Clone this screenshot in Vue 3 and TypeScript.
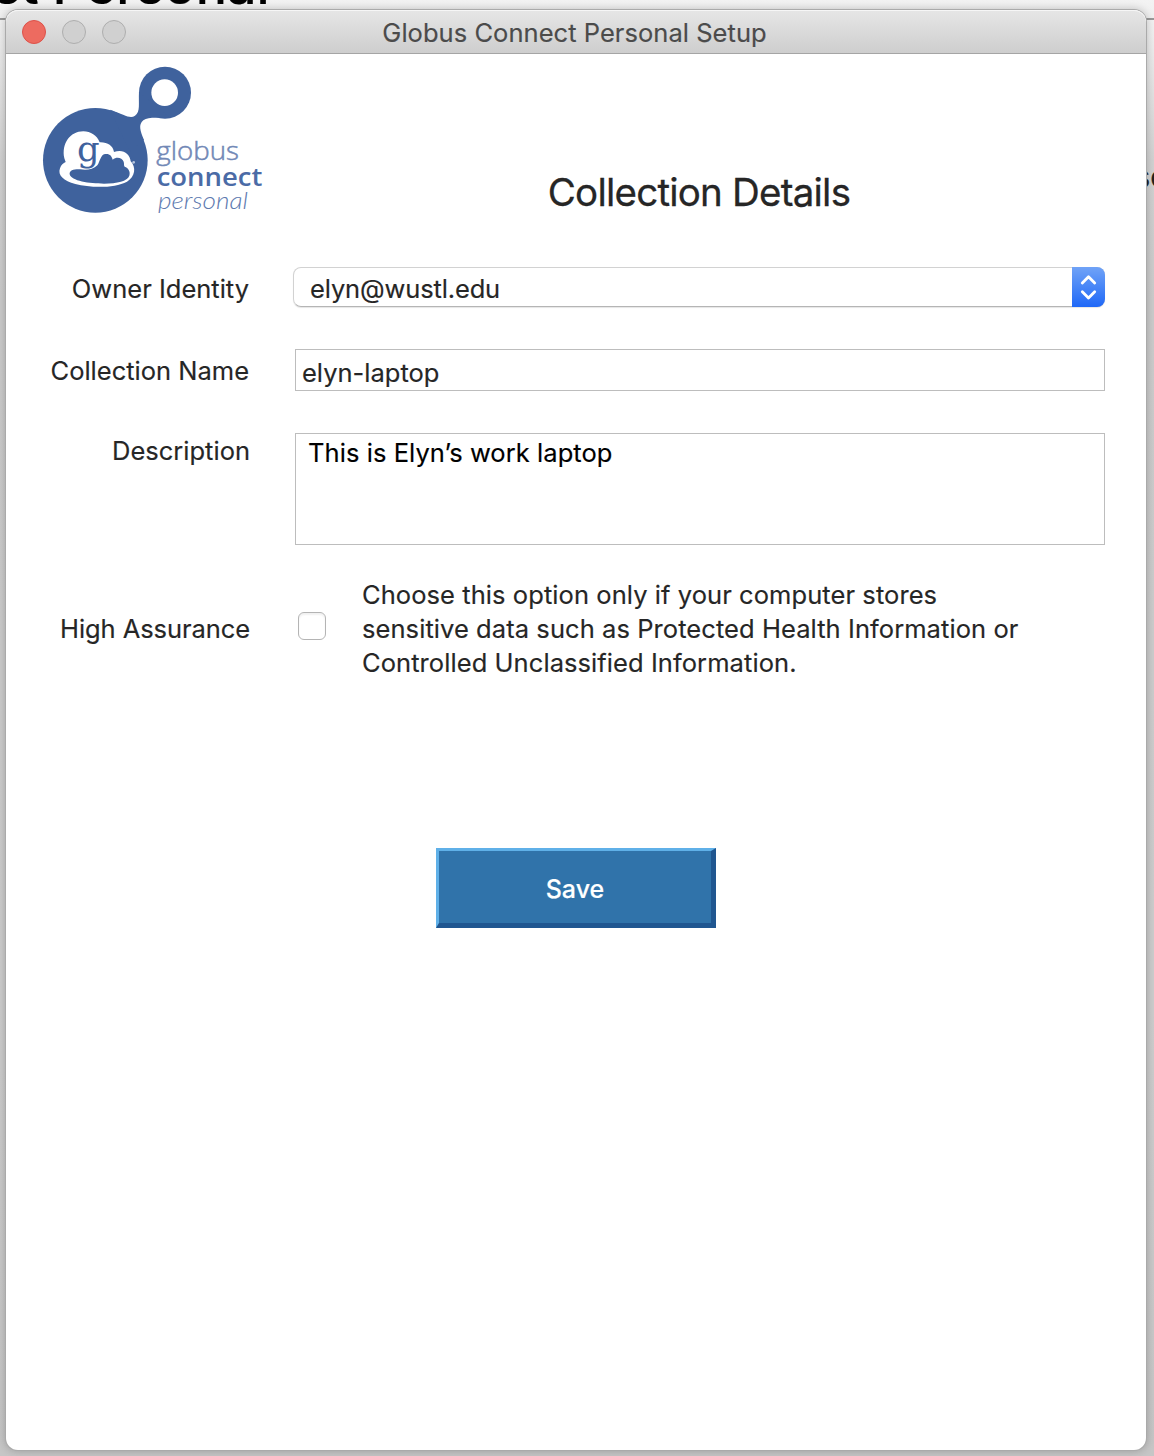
<script setup lang="ts">
import { ref } from 'vue'

const owner = ref('elyn@wustl.edu')
const collectionName = ref('elyn-laptop')
const description = ref('This is Elyn’s work laptop')
const highAssurance = ref(false)
const hint = [
  'Choose this option only if your computer stores',
  'sensitive data such as Protected Health Information or',
  'Controlled Unclassified Information.',
]
</script>

<template>
  <div class="desktop">
    <div class="back-rule"></div>
    <span class="back-title">st Personal</span>
    <span class="back-text">se</span>

    <main class="window">
      <header class="titlebar">
        <div class="lights">
          <i class="light close"></i>
          <i class="light"></i>
          <i class="light"></i>
        </div>
        <span class="title">Globus Connect Personal Setup</span>
      </header>

      <section class="intro">
        <svg class="logo" width="250" height="160" viewBox="0 0 750 480">
          <g fill="#3f629d">
            <circle cx="196" cy="316" r="157" />
            <circle cx="405" cy="113" r="78" />
            <path d="M240 164 C285 180 300 192 315 182 C332 170 325 145 327 110 L420 188 C385 190 355 184 340 196 C324 209 331 228 342 255 L300 290 Z" />
          </g>
          <circle cx="404" cy="113" r="40" fill="#fff" />
          <path fill="#fff" d="M103 310 C94 266 120 229 160 229 C182 229 201 241 209 262 C232 261 249 272 252 291 C278 281 300 295 302 319 C319 336 316 366 291 380 C253 400 183 399 136 387 C101 379 82 360 90 340 C93 330 100 324 107 321 Z" />
          <path fill="#3f629d" d="M119 358 C117 345 134 342 151 343 C168 346 190 344 202 331 C211 318 211 300 225 297 C239 295 245 302 248 314 C261 304 276 309 281 320 C283 326 281 331 284 335 C295 338 302 350 298 362 C292 379 262 385 222 386 C179 386 123 378 119 358 Z" />
          <text class="mark" x="141" y="319" textLength="68" lengthAdjust="spacingAndGlyphs">g</text>
          <circle cx="311" cy="322" r="4" fill="#b8c6de" />
          <text class="globus" x="379" y="315" textLength="248" lengthAdjust="spacingAndGlyphs">globus</text>
          <text class="connect" x="380" y="392" textLength="317" lengthAdjust="spacingAndGlyphs">connect</text>
          <text class="personal" x="384" y="461" textLength="270" lengthAdjust="spacingAndGlyphs">personal</text>
        </svg>
        <h1>Collection Details</h1>
      </section>

      <form class="form" @submit.prevent>
        <label class="label owner">Owner Identity</label>
        <div class="select">
          <span class="select-value">{{ owner }}</span>
          <span class="stepper">
            <svg width="33" height="40" viewBox="0 0 33 40" fill="none" stroke="#fff" stroke-width="2.8" stroke-linecap="round" stroke-linejoin="round">
              <path d="M10.3 16 L16.5 9.7 L22.7 16 M10.3 24.7 L16.5 31 L22.7 24.7" />
            </svg>
          </span>
        </div>

        <label class="label name">Collection Name</label>
        <div class="input"><span>{{ collectionName }}</span></div>

        <label class="label desc">Description</label>
        <div class="area"><span>{{ description }}</span></div>

        <label class="label high">High Assurance</label>
        <div class="assurance">
          <span class="checkbox" role="checkbox" :aria-checked="highAssurance"></span>
          <p class="hint">
            <span v-for="(line, i) in hint" :key="i">{{ line }}</span>
          </p>
        </div>
      </form>

      <button class="save" type="button"><span>Save</span></button>
    </main>
  </div>
</template>

<style>
body {
  margin: 0;
}
</style>

<style scoped>
.desktop {
  position: relative;
  box-sizing: border-box;
  width: 1154px;
  height: 1456px;
  padding: 10px 8px 6px 6px;
  overflow: hidden;
  background: linear-gradient(#f3f3f3 0, #efefef 19px, #f2f2f2 20px, #d2d2d2 160px, #cbcbcb 300px, #cdcdcd 1000px, #c6c6c6 1456px);
  font-family: Inter, "Liberation Sans", sans-serif;
  font-size: 25.5px;
  color: #262626;
  -webkit-text-stroke: 0.15px currentColor;
}
.back-rule {
  position: absolute;
  left: 0;
  right: 0;
  top: 18px;
  height: 2px;
  background: #999;
}
.back-title {
  position: absolute;
  left: -7px;
  top: -44px;
  font-size: 52px;
  line-height: 60px;
  font-weight: 500;
  color: #000;
  white-space: nowrap;
}
.back-text {
  position: absolute;
  left: 1132px;
  top: 156px;
  font-size: 33px;
  line-height: 40px;
  font-weight: 600;
  color: #222;
}
.window {
  position: relative;
  display: flex;
  flex-direction: column;
  width: 1140px;
  height: 1440px;
  border-radius: 12px;
  background: #fff;
  box-shadow: 0 0 0 1px #aaa, 0 0 8px 1px rgba(0, 0, 0, 0.22);
}
.titlebar {
  box-sizing: border-box;
  position: relative;
  display: flex;
  align-items: center;
  justify-content: center;
  height: 44px;
  border-bottom: 1px solid #a5a5a5;
  border-radius: 12px 12px 0 0;
  background: linear-gradient(#e6e6e6, #cecece);
  box-shadow: inset 0 1px 0 #f6f6f6;
}
.lights {
  position: absolute;
  left: 16px;
  top: 10px;
  display: flex;
  gap: 16px;
}
.light {
  box-sizing: border-box;
  width: 24px;
  height: 24px;
  border: 1px solid #aeaeae;
  border-radius: 50%;
  background: #d0d0d0;
}
.light.close {
  border-color: #dd5149;
  background: #ed6b60;
}
.title {
  line-height: 30px;
  margin: 2px 3px 0 0;
  letter-spacing: 0.04px;
  color: #4b4b4b;
  white-space: nowrap;
}
.intro {
  display: flex;
  height: 213px;
}
.logo {
  flex: none;
  margin: 1px 0 0 24px;
  overflow: visible;
  -webkit-text-stroke: 0;
}
.mark {
  font: 108px "DejaVu Serif", serif;
  fill: #3f629d;
}
.globus {
  font: 300 78px "Open Sans", sans-serif;
  fill: #7188b6;
  stroke: #7188b6;
  stroke-width: 1.5px;
}
.connect {
  font: 600 78px "Open Sans", sans-serif;
  fill: #4b6ba6;
}
.personal {
  font: italic 300 72px Lato, sans-serif;
  fill: #5e7ab0;
}
h1 {
  flex: 1;
  margin: 114px 28px 0 0;
  text-align: center;
  font-size: 38.5px;
  line-height: 48px;
  font-weight: 400;
  white-space: nowrap;
  letter-spacing: -0.78px;
  -webkit-text-stroke: 0.3px currentColor;
}
.form {
  display: grid;
  grid-template-columns: 244px 816px;
  column-gap: 43px;
}
.label {
  justify-self: end;
  line-height: 34px;
  white-space: nowrap;
}
.owner { margin: 5px 1px 0 0; }
.name { margin: 5px 1px 0 0; }
.desc { margin-top: 1px; }
.high {
  margin-top: 67px;
  letter-spacing: -0.08px;
}
.select {
  box-sizing: border-box;
  display: flex;
  justify-content: space-between;
  width: 812px;
  height: 40px;
  margin-bottom: 42px;
  border: 1px solid #d2d2d2;
  border-bottom-color: #b5b5b5;
  border-radius: 8px;
  box-shadow: 0 1px 1px rgba(0, 0, 0, 0.1);
}
.select-value {
  padding: 4px 0 0 16px;
  line-height: 34px;
  letter-spacing: -0.14px;
}
.stepper {
  width: 33px;
  height: 40px;
  margin: -1px;
  border-radius: 0 8px 8px 0;
  background: linear-gradient(#70a3f7, #1f68f7);
}
.input,
.area {
  box-sizing: border-box;
  width: 810px;
  margin-left: 2px;
  border: 1px solid #bdbdbd;
  line-height: 34px;
}
.input {
  height: 42px;
  margin-bottom: 42px;
  padding: 6px 0 0 6px;
}
.area {
  height: 112px;
  padding: 2px 0 0 12px;
  color: #000;
  letter-spacing: 0.06px;
}
.assurance {
  display: flex;
  align-items: flex-start;
}
.checkbox {
  box-sizing: border-box;
  width: 28px;
  height: 28px;
  margin: 67px 36px 0 5px;
  border: 1px solid #b4b4b4;
  border-radius: 6px;
  box-shadow: inset 0 2px 2px rgba(0, 0, 0, 0.06);
}
.hint {
  display: flex;
  flex-direction: column;
  align-items: flex-start;
  margin: 33px 0 0;
  line-height: 34px;
  letter-spacing: 0.07px;
  white-space: nowrap;
}
.save {
  align-self: flex-start;
  box-sizing: border-box;
  width: 280px;
  height: 80px;
  margin: 168px 0 0 430px;
  padding: 4px 0 0;
  border: solid;
  border-width: 3px 5px 5px 3px;
  border-color: #5fb0e8 #205690 #205690 #5fb0e8;
  background: #3073aa;
  color: #fff;
  font: 500 25px/34px Inter, "Liberation Sans", sans-serif;
}
</style>
